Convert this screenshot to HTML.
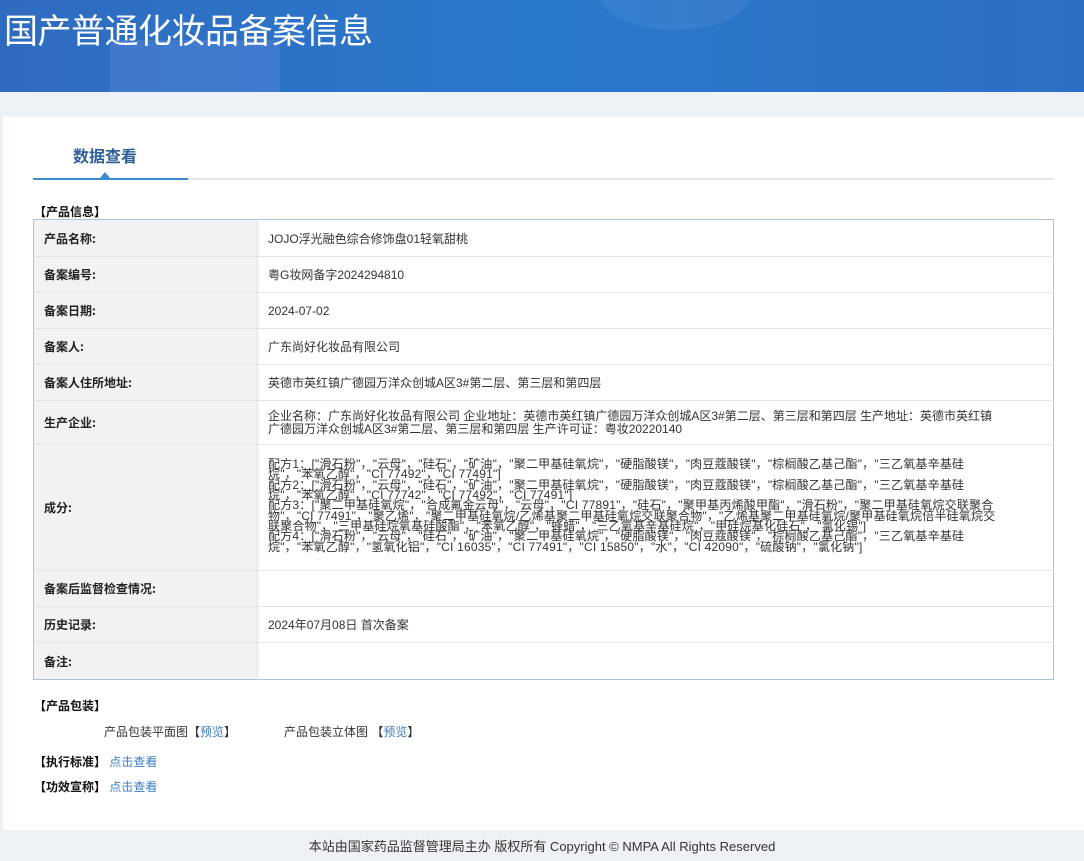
<!DOCTYPE html>
<html><head><meta charset="utf-8"><style>
*{margin:0;padding:0;box-sizing:border-box}
body{width:1084px;height:861px;background:#eef2f6;font-family:"Liberation Sans","Noto Sans CJK SC",sans-serif;font-size:12px;color:#333;position:relative;overflow:hidden}
.hd{position:absolute;left:0;top:0;width:1084px;height:92px;background:linear-gradient(90deg,#2f6cc0,#2a78cc 50%,#2d6fc4);overflow:hidden}
.hd h1{position:absolute;left:4px;top:4px;font-size:34px;font-weight:normal;color:#fff;letter-spacing:-0.5px;font-family:"Noto Sans CJK SC",sans-serif}
.hd .c1{position:absolute;left:110px;top:40px;width:170px;height:60px;background:rgba(120,150,230,.25)}
.hd .c2{position:absolute;left:600px;top:-40px;width:150px;height:70px;border-radius:50%;background:rgba(255,255,255,.06)}
.panel{position:absolute;left:3px;top:117px;width:1081px;height:713px;background:#fff}
.tab{position:absolute;left:73px;top:143px;font-size:16px;font-weight:bold;color:#2f5f9a;font-family:"Noto Sans CJK SC",sans-serif}
.line{position:absolute;left:33px;top:178px;width:1021px;height:2px;background:#e6e6e6}
.line b{position:absolute;left:0;top:0;width:155px;height:2px;background:#3a8bd0}
.tri{position:absolute;top:172px;width:0;height:0;border-left:5px solid transparent;border-right:5px solid transparent;border-bottom:6px solid #3a8bd0}
.sec{position:absolute;font-weight:bold;color:#111;font-size:12px;font-family:"Noto Sans CJK SC",sans-serif}
table{position:absolute;left:33px;top:219px;width:1021px;border-collapse:collapse;border:1px solid #a9c3dd}
td{border-bottom:1px solid #e4e4e4;vertical-align:middle;font-size:12px}
td.l{width:224px;background:#f2f2f2;font-weight:bold;padding-left:10px;color:#222;font-family:"Noto Sans CJK SC",sans-serif;border-right:1px solid #e4e4e4}
td.v{padding-left:10px;color:#333}
.ing{padding-bottom:4px}
.ing div{height:10.4px;line-height:10.4px;white-space:nowrap;letter-spacing:0.2px;font-size:12px}
a{color:#3b7ec2;text-decoration:none}
.ft{position:absolute;left:0;top:836px;width:1084px;text-align:center;font-size:13px;color:#333}
</style></head><body>
<div class="hd"><div class="c1"></div><div class="c2"></div><h1>国产普通化妆品备案信息</h1></div>
<div class="panel"></div>
<div class="tab">数据查看</div>
<div class="line"><b></b></div><div class="tri" style="left:100px"></div>
<div class="sec" style="left:34px;top:203px">【产品信息】</div>
<table>
<tr style="height:37px"><td class="l">产品名称:</td><td class="v">JOJO浮光融色综合修饰盘01轻氧甜桃</td></tr>
<tr style="height:36px"><td class="l">备案编号:</td><td class="v">粤G妆网备字2024294810</td></tr>
<tr style="height:36px"><td class="l">备案日期:</td><td class="v">2024-07-02</td></tr>
<tr style="height:36px"><td class="l">备案人:</td><td class="v">广东尚好化妆品有限公司</td></tr>
<tr style="height:36px"><td class="l">备案人住所地址:</td><td class="v">英德市英红镇广德园万洋众创城A区3#第二层、第三层和第四层</td></tr>
<tr style="height:44px"><td class="l">生产企业:</td><td class="v" style="line-height:13px;padding-right:50px">企业名称：广东尚好化妆品有限公司 企业地址：英德市英红镇广德园万洋众创城A区3#第二层、第三层和第四层 生产地址：英德市英红镇广德园万洋众创城A区3#第二层、第三层和第四层 生产许可证：粤妆20220140</td></tr>
<tr style="height:126px"><td class="l">成分:</td><td class="v ing">
<div>配方1：["滑石粉"，"云母"，"硅石"，"矿油"，"聚二甲基硅氧烷"，"硬脂酸镁"，"肉豆蔻酸镁"，"棕榈酸乙基己酯"，"三乙氧基辛基硅</div>
<div>烷"，"苯氧乙醇"，"CI 77492"，"CI 77491"]</div>
<div>配方2：["滑石粉"，"云母"，"硅石"，"矿油"，"聚二甲基硅氧烷"，"硬脂酸镁"，"肉豆蔻酸镁"，"棕榈酸乙基己酯"，"三乙氧基辛基硅</div>
<div>烷"，"苯氧乙醇"，"CI 77742"，"CI 77492"，"CI 77491"]</div>
<div>配方3：["聚二甲基硅氧烷"，"合成氟金云母"，"云母"，"CI 77891"，"硅石"，"聚甲基丙烯酸甲酯"，"滑石粉"，"聚二甲基硅氧烷交联聚合</div>
<div>物"，"CI 77491"，"聚乙烯"，"聚二甲基硅氧烷/乙烯基聚二甲基硅氧烷交联聚合物"，"乙烯基聚二甲基硅氧烷/聚甲基硅氧烷倍半硅氧烷交</div>
<div>联聚合物"，"三甲基硅烷氧基硅酸酯"，"苯氧乙醇"，"蜂蜡"，"三乙氧基辛基硅烷"，"甲硅烷基化硅石"，"氯化锡"]</div>
<div>配方4：["滑石粉"，"云母"，"硅石"，"矿油"，"聚二甲基硅氧烷"，"硬脂酸镁"，"肉豆蔻酸镁"，"棕榈酸乙基己酯"，"三乙氧基辛基硅</div>
<div>烷"，"苯氧乙醇"，"氢氧化铝"，"CI 16035"，"CI 77491"，"CI 15850"，"水"，"CI 42090"，"硫酸钠"，"氯化钠"]</div>
</td></tr>
<tr style="height:36px"><td class="l">备案后监督检查情况:</td><td class="v"></td></tr>
<tr style="height:36px"><td class="l">历史记录:</td><td class="v">2024年07月08日 首次备案</td></tr>
<tr style="height:37px"><td class="l" style="border-bottom:none">备注:</td><td class="v" style="border-bottom:none"></td></tr>
</table>
<div class="sec" style="left:34px;top:697px">【产品包装】</div>
<div style="position:absolute;left:104px;top:723px">产品包装平面图【<a>预览</a>】</div>
<div style="position:absolute;left:284px;top:723px">产品包装立体图 【<a>预览</a>】</div>
<div style="position:absolute;left:34px;top:753px"><span class="sec" style="position:static">【执行标准】</span> <a>点击查看</a></div>
<div style="position:absolute;left:34px;top:778px"><span class="sec" style="position:static">【功效宣称】</span> <a>点击查看</a></div>
<div class="ft">本站由国家药品监督管理局主办 版权所有 Copyright © NMPA All Rights Reserved</div>
</body></html>
